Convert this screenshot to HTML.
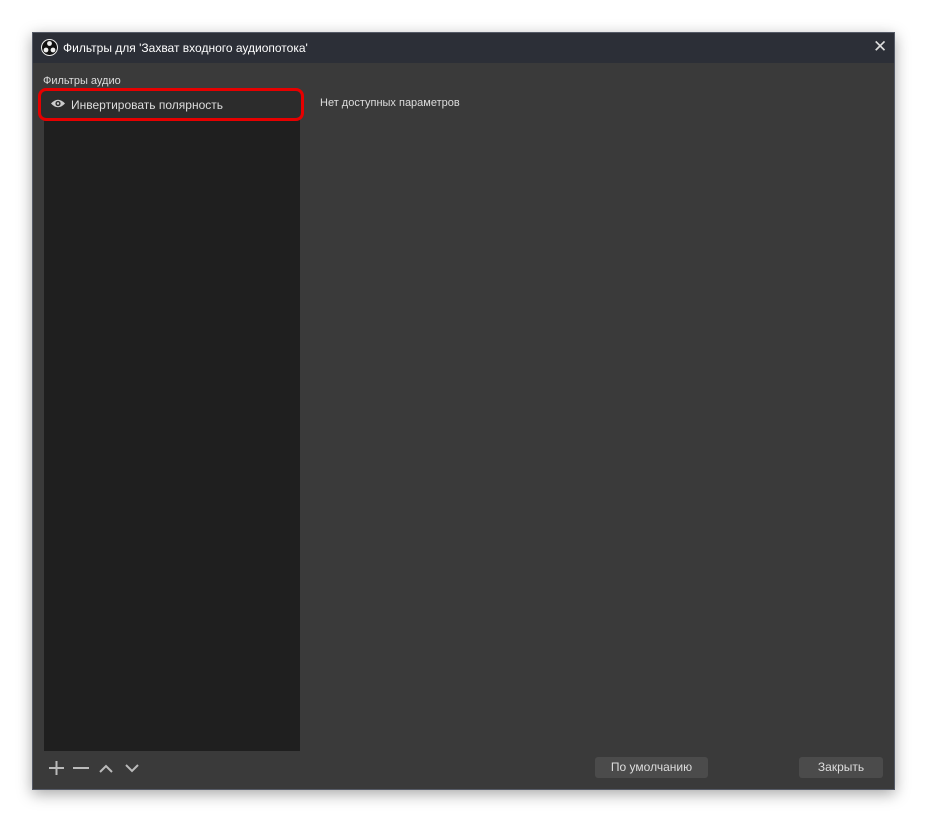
<!DOCTYPE html>
<html><head><meta charset="utf-8"><style>
body{margin:0;width:927px;height:822px;background:#fff;position:relative;overflow:hidden;font-family:"Liberation Sans",sans-serif;font-size:12px}
.win{position:absolute;left:32px;top:32px;width:863px;height:758px;background:#3a3a3a;box-shadow:0 4px 14px rgba(0,0,0,.35);border:1px solid #555a66;box-sizing:border-box}
.title{position:absolute;left:0;top:0;width:100%;height:30px;background:#2c2f37;color:#fff}
.abs{position:absolute}
.btn{position:absolute;background:#4b4b4b;border-radius:3px;color:#ddd;text-align:center;line-height:21px;height:21px}
</style></head><body>
<div class="win">
<div class="title">
<svg class="abs" style="left:8px;top:6px" width="17" height="17" viewBox="0 0 17 17"><circle cx="8.5" cy="8.5" r="8" fill="#111" stroke="#eee" stroke-width="1"/><circle cx="8.5" cy="4.5" r="2.4" fill="#eee"/><circle cx="5" cy="11" r="2.4" fill="#eee"/><circle cx="12" cy="11" r="2.4" fill="#eee"/></svg>
<div class="abs" style="left:30px;top:8px;font-size:12px">Фильтры для 'Захват входного аудиопотока'</div>
<div class="abs" style="left:840px;top:4px;font-size:17px;color:#ddd">✕</div>
</div>
<div class="abs" style="left:10px;top:42px;color:#ddd;font-size:11px">Фильтры аудио</div>
<div class="abs" style="left:11px;top:60px;width:256px;height:658px;background:#1f1f1f"></div>
<div class="abs" style="left:5px;top:55px;width:266px;height:33px;background:#2c2c2c;border:3px solid #e60000;border-radius:8px;box-sizing:border-box"></div>
<svg class="abs" style="left:17px;top:65px" width="16" height="11" viewBox="0 0 16 11"><path d="M1 5.5Q8 -2 15 5.5Q8 13 1 5.5Z" fill="#ccc"/><circle cx="8" cy="5.5" r="2.6" fill="#2c2c2c"/><circle cx="8" cy="5.5" r="1.2" fill="#ccc"/></svg>
<div class="abs" style="left:38px;top:65px;color:#ddd">Инвертировать полярность</div>
<div class="abs" style="left:287px;top:64px;color:#ddd;font-size:11px">Нет доступных параметров</div>
<svg class="abs" style="left:13px;top:725px" width="100" height="20" viewBox="0 0 100 20"><g stroke="#bbb" stroke-width="2" fill="none"><path d="M3 10H18M10.5 3V17"/><path d="M27 10H43"/><path d="M54 14L60 8L66 14"/><path d="M80 7L86 13L92 7"/></g></svg>
<div class="btn" style="left:562px;top:724px;width:113px">По умолчанию</div>
<div class="btn" style="left:766px;top:724px;width:84px">Закрыть</div>
</div>
</body></html>
